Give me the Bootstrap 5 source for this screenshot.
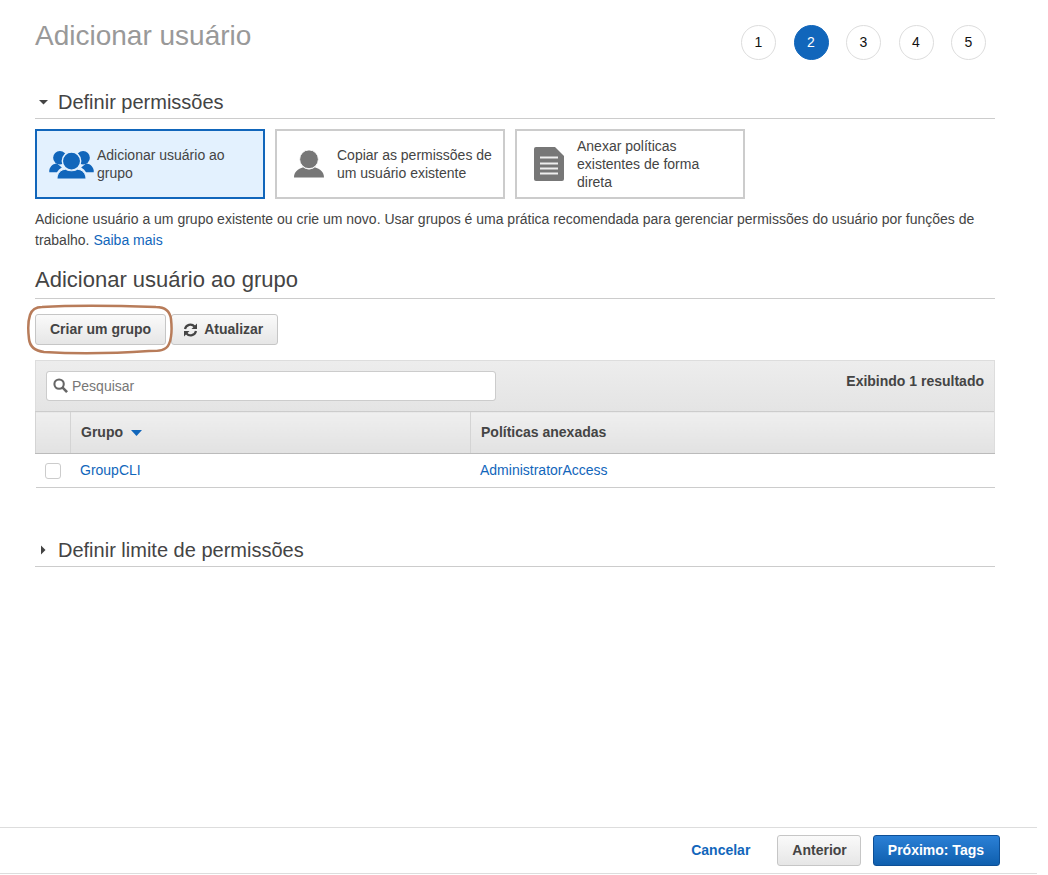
<!DOCTYPE html>
<html lang="pt-BR">
<head>
  <meta charset="UTF-8">
  <title>Adicionar usuário</title>
  <meta name="viewport" content="width=device-width, initial-scale=1">
  <link href="https://cdn.jsdelivr.net/npm/bootstrap@5.3.0/dist/css/bootstrap.min.css" rel="stylesheet">
  <style>
    body { background: #fff; color: #444; font-family: "Liberation Sans", Arial, sans-serif; font-size: 14px; }
    a { color: #1166bb; text-decoration: none; }
    .wizard-page { width: 1037px; height: 875px; position: relative; }
    .wizard-body { padding: 25px 42px 0 35px; }

    .page-title { font-size: 28px; line-height: 22px; font-weight: 400; color: #999; margin: 0; padding-top: 0; }
    .step-list { gap: 17.5px; margin-right: 9px; }
    .step-dot { width: 35px; height: 35px; border: 1px solid #ddd; border-radius: 50%; color: #111; font-size: 14px; }
    .step-dot.current { background: #1166bb; border-color: #1166bb; color: #fff; }

    .sec-head { font-size: 20px; line-height: 24px; font-weight: 400; color: #444; margin: 0; padding-bottom: 4px; border-bottom: 1px solid #ccc; }
    .sec-caret { width: 10px; height: 10px; margin: 0 9px 0 4px; flex: none; }
    .sec-perm { margin-top: 30px; }
    .sec-group { margin-top: 17px; padding-bottom: 6px; font-size: 22px; }
    .sec-limit { margin-top: 50px; }

    .choice-row { gap: 10px; margin-top: 10px; }
    .choice-tile { width: 230px; height: 70px; border: 2px solid #ccc; line-height: 18px; padding-right: 5px; }
    .choice-tile.active-tile { border-color: #1166bb; background: #e3f1fe; }
    .choice-icon { width: 60px; padding-left: 4px; flex: none; }
    .choice-icon.wide-icon { padding-left: 9px; }
    .choice-note { margin: 10px 0 0; line-height: 21px; }

    .action-row { gap: 5px; margin-top: 15px; }
    .aws-btn { height: 31px; padding: 0 14px; font-size: 14px; font-weight: 700; color: #444; border: 1px solid #c6c6c6; border-radius: 3px; background: linear-gradient(#fafafa, #e6e6e6); line-height: 29px; }
    .aws-btn:hover { color: #444; border-color: #aaa; }
    .aws-btn.refresh-btn { padding-left: 11px; gap: 6px; }
    .aws-btn.back-btn { padding-right: 13px; }
    .aws-btn.go-btn { color: #fff; border-color: #0d4f96; background: linear-gradient(#2b80d6, #0f5fae); padding-right: 15px; }
    .link-btn { color: #1166bb; font-weight: 700; }

    .grid-box { margin-top: 15px; }
    .grid-tools { height: 51px; padding: 10px; background: linear-gradient(#ededed, #e4e4e4); border: 1px solid #ddd; border-bottom: 0; position: relative; }
    .search-wrap { width: 450px; position: relative; }
    .search-wrap svg { position: absolute; left: 7px; top: 7px; }
    .search-input { height: 30px; padding: 0 0 0 25px; font-size: 14px; border: 1px solid #ccc; border-radius: 3px; color: #444; }
    .search-input::placeholder { color: #777; }
    .result-count { font-weight: 700; font-size: 14px; line-height: 20px; }

    .grid-table { margin: 0; table-layout: fixed; color: #444; }
    .grid-table th { height: 42px; padding: 0 10px; vertical-align: middle; font-weight: 700; color: #444; background: linear-gradient(#efefef, #e2e2e2); border: 0; border-top: 1px solid #ccc; border-left: 1px solid #d4d4d4; border-bottom: 1px solid #bbb; box-shadow: none; }
    .grid-table th:last-child { border-right: 1px solid #ddd; }
    .grid-table td { height: 34px; padding: 0 9.500px; vertical-align: middle; border-bottom: 1px solid #ccc; }
    .grid-table td:first-child { padding: 0 0 0 9px; }
    .row-check { width: 16px; height: 16px; border: 1px solid #ccc; border-radius: 3px; margin: 0; display: block; }
    .sort-mark { margin-left: 4px; }

    .wizard-foot { position: absolute; left: 0; right: 0; top: 827px; height: 47px; border-top: 1px solid #ddd; border-bottom: 1px solid #ddd; gap: 12px; padding-right: 37px; }
    .wizard-foot .link-btn { margin-right: 15px; }

    .draw-circle { position: absolute; left: 26px; top: 304px; pointer-events: none; }
  </style>
</head>
<body>
<div class="wizard-page">
  <div class="wizard-body">

    <div class="d-flex justify-content-between align-items-start">
      <h1 class="page-title">Adicionar usuário</h1>
      <div class="step-list d-flex">
        <div class="step-dot d-flex align-items-center justify-content-center">1</div>
        <div class="step-dot current d-flex align-items-center justify-content-center">2</div>
        <div class="step-dot d-flex align-items-center justify-content-center">3</div>
        <div class="step-dot d-flex align-items-center justify-content-center">4</div>
        <div class="step-dot d-flex align-items-center justify-content-center">5</div>
      </div>
    </div>

    <h2 class="sec-head sec-perm d-flex align-items-center">
      <svg class="sec-caret" viewBox="0 0 10 10"><path d="M0 3h9L4.500 7.500z" fill="#444"/></svg>
      Definir permissões
    </h2>

    <div class="choice-row d-flex">
      <div class="choice-tile active-tile d-flex align-items-center">
        <div class="choice-icon wide-icon d-flex justify-content-center">
          <svg width="45" height="29" viewBox="0 0 46 30" fill="#1166bb">
            <circle cx="11" cy="8" r="7"/><circle cx="35" cy="8" r="7"/>
            <path d="M0 21c1-5 5-7 8-7l5 4c-2 1-4 3-5 5H0zM46 21c-1-5-5-7-8-7l-5 4c2 1 4 3 5 5h8z"/>
            <circle cx="23" cy="11.500" r="9.500" stroke="#e3f1fe" stroke-width="1.500"/>
            <path d="M8 30c0-6 4-10 9-10 2 2 10 2 12 0 5 0 9 4 9 10z" stroke="#e3f1fe" stroke-width="1"/>
          </svg>
        </div>
        <span>Adicionar usuário ao grupo</span>
      </div>
      <div class="choice-tile d-flex align-items-center">
        <div class="choice-icon d-flex justify-content-center">
          <svg width="30" height="28" viewBox="0 0 32 29" fill="#777">
            <path d="M0 29c0-6 4-9 10-11 3 3 9 3 12 0 6 2 10 5 10 11z"/>
            <circle cx="16" cy="9.500" r="10" stroke="#fff" stroke-width="1"/>
          </svg>
        </div>
        <span>Copiar as permissões de um usuário existente</span>
      </div>
      <div class="choice-tile d-flex align-items-center">
        <div class="choice-icon d-flex justify-content-center">
          <svg width="30" height="34" viewBox="0 0 30 34">
            <path d="M2 0h19l9 9v23a2 2 0 0 1-2 2H2a2 2 0 0 1-2-2V2a2 2 0 0 1 2-2z" fill="#777"/>
            <path d="M6 10.500h18M6 16.500h18M6 21.500h18M6 26.500h18" stroke="#eee" stroke-width="2"/>
          </svg>
        </div>
        <span>Anexar políticas existentes de forma direta</span>
      </div>
    </div>

    <p class="choice-note">Adicione usuário a um grupo existente ou crie um novo. Usar grupos é uma prática recomendada para gerenciar permissões do usuário por funções de trabalho. <a href="#">Saiba mais</a></p>

    <h2 class="sec-head sec-group">Adicionar usuário ao grupo</h2>

    <div class="action-row d-flex">
      <button type="button" class="btn aws-btn">Criar um grupo</button>
      <button type="button" class="btn aws-btn refresh-btn d-flex align-items-center">
        <svg width="15" height="14" viewBox="0 0 15 14" fill="none" stroke="#444" stroke-width="2.200">
          <path d="M2 6a5.500 5.500 0 0 1 9.500-2.500"/><path d="M13 8a5.500 5.500 0 0 1-9.500 2.500"/>
          <path d="M14 0.500v5.500H8.500z" fill="#444" stroke="none"/><path d="M1 13.500V8h5.500z" fill="#444" stroke="none"/>
        </svg>
        Atualizar
      </button>
    </div>

    <div class="grid-box">
      <div class="grid-tools d-flex justify-content-between">
        <div class="search-wrap">
          <svg width="15" height="15" viewBox="0 0 16 16" fill="none" stroke="#666" stroke-width="2.200"><circle cx="6.500" cy="6.500" r="5"/><path d="M10 10l5 5" stroke-width="2.800"/></svg>
          <input type="text" class="form-control search-input" placeholder="Pesquisar">
        </div>
        <div class="result-count">Exibindo 1 resultado</div>
      </div>
      <table class="table grid-table">
        <colgroup><col width="35"><col width="400"><col></colgroup>
        <thead>
          <tr>
            <th></th>
            <th>Grupo <svg class="sort-mark" width="11" height="6" viewBox="0 0 11 6"><path d="M0 0h11L5.500 6z" fill="#1166bb"/></svg></th>
            <th>Políticas anexadas</th>
          </tr>
        </thead>
        <tbody>
          <tr>
            <td><div class="row-check"></div></td>
            <td><a href="#">GroupCLI</a></td>
            <td><a href="#">AdministratorAccess</a></td>
          </tr>
        </tbody>
      </table>
    </div>

    <h2 class="sec-head sec-limit d-flex align-items-center">
      <svg class="sec-caret" viewBox="0 0 10 10"><path d="M2 0.500v9L6.500 5z" fill="#444"/></svg>
      Definir limite de permissões
    </h2>
  </div>

  <div class="wizard-foot d-flex align-items-center justify-content-end">
    <a href="#" class="link-btn">Cancelar</a>
    <button type="button" class="btn aws-btn back-btn">Anterior</button>
    <button type="button" class="btn aws-btn go-btn">Próximo: Tags</button>
  </div>

  <svg class="draw-circle" width="150" height="52" viewBox="0 0 150 52" fill="none" stroke="#b87c5a" stroke-width="2.500">
    <path d="M16 3C50 1 100 2 130 3c10 0 14 5 15 12 1 9 1 18-2 25-3 7-10 7-20 7-30 2-70 3-105 1C10 47 4 44 3 35 2 27 2 17 4 11 6 5 10 3 16 3z"/>
  </svg>
</div>
<script src="https://cdn.jsdelivr.net/npm/bootstrap@5.3.0/dist/js/bootstrap.bundle.min.js"></script>
</body>
</html>
